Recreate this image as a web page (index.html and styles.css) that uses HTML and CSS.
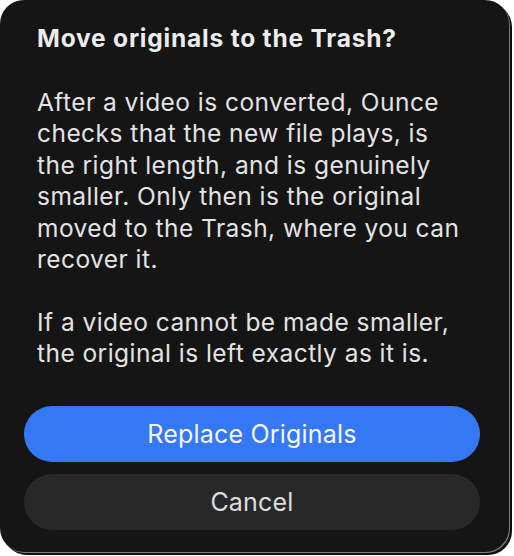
FILE: index.html
```html
<!DOCTYPE html>
<html>
<head>
<meta charset="utf-8">
<link rel="stylesheet" href="styles.css">
</head>
<body>
<div class="dialog">
  <div class="content">
    <h1 class="title">Move originals to the Trash?</h1>
    <p class="text">After a video is converted, Ounce checks that the new file plays, is the right length, and is genuinely smaller. Only then is the original moved to the Trash, where you can recover it.</p>
    <p class="text">If a video cannot be made smaller, the original is left exactly as it is.</p>
  </div>
  <div class="buttons">
    <button class="btn btn-primary">Replace Originals</button>
    <button class="btn btn-secondary">Cancel</button>
  </div>
</div>
</body>
</html>
```
FILE: styles.css
```css
html, body {
  margin: 0;
  padding: 0;
  background: #ffffff;
}
body {
  width: 514px;
  height: 556px;
  overflow: hidden;
  font-family: Inter, "Noto Sans", "Liberation Sans", sans-serif;
}
.dialog {
  box-sizing: border-box;
  width: 509px;
  height: 552px;
  background: #151515;
  border-radius: 24px;
  box-shadow: 1px 1px 0 0 #7d7d7d, 3px 3px 0 0 #0e0e0e;
  display: flex;
  flex-direction: column;
}
.content {
  padding: 23px 40px 0 37px;
  flex: 1;
}
.title {
  margin: 0;
  font-size: 24.5px;
  font-weight: 700;
  line-height: 30px;
  color: #ececec;
  letter-spacing: 0.8px;
}
.text {
  margin: 34px 0 0 0;
  font-size: 24.5px;
  line-height: 31.4px;
  color: #e3e3e3;
  letter-spacing: 0.45px;
}
.text + .text {
  margin-top: 31.4px;
}
.buttons {
  display: flex;
  flex-direction: column;
  gap: 12px;
  padding: 0 29px 22px 24px;
}
.btn {
  height: 56px;
  border: none;
  border-radius: 28px;
  font-family: inherit;
  font-size: 25px;
  font-weight: 400;
  letter-spacing: 0.2px;
  padding: 0;
}
.btn-primary {
  background: #3479f3;
  color: #f4f7fe;
}
.btn-secondary {
  background: #282828;
  color: #dedede;
}
```
